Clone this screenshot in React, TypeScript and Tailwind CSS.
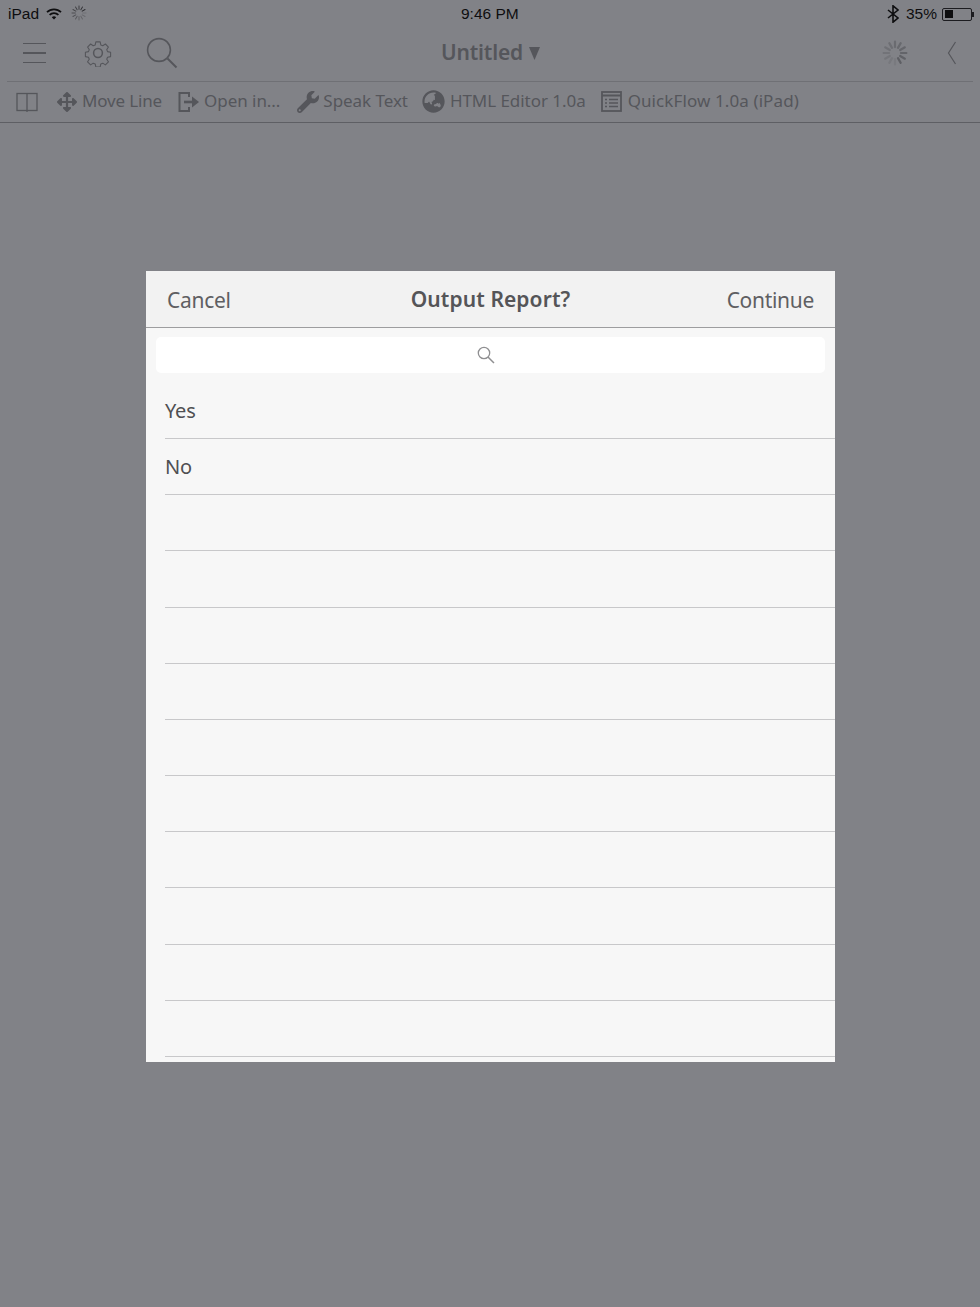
import React from "react";
import { FaWrench, FaGlobeAsia, FaArrowsAlt } from "react-icons/fa";

const sans = "font-['Noto_Sans',sans-serif]";

function Spinner({ size, color, width, dark, className = "" }: { size: number; color: string; width: number; dark: number; className?: string }) {
  const spokes = Array.from({ length: 12 }, (_, i) => i);
  return (
    <svg width={size} height={size} viewBox="0 0 24 24" className={className}>
      {spokes.map((i) => (
        <line
          key={i}
          x1="12"
          y1="1.500"
          x2="12"
          y2="6.500"
          stroke={color}
          strokeWidth={width}
          strokeLinecap="round"
          opacity={0.2 + (((i - dark + 12 + 11) % 12) / 11) * 0.8}
          transform={`rotate(${i * 30} 12 12)`}
        />
      ))}
    </svg>
  );
}

function Gear() {
  return (
    <svg width="28" height="28" viewBox="0 0 28 28" fill="none" stroke="#55565b" strokeWidth="1.200">
      <circle cx="14" cy="14" r="4.400" strokeWidth="1.500" />
      <path d="M11.600 1.600h4.800l.7 3.400 2.200.9 2.900-1.900 3.400 3.400-1.900 2.900.9 2.200 3.400.7v4.800l-3.400.7-.9 2.200 1.900 2.900-3.400 3.400-2.900-1.900-2.200.9-.7 3.400h-4.800l-.7-3.400-2.200-.9-2.900 1.900-3.400-3.400 1.900-2.900-.9-2.200-3.400-.7v-4.800l3.400-.7.9-2.200-1.900-2.900 3.400-3.400 2.900 1.900 2.200-.9z" transform="translate(1.400 1.400) scale(.9)" strokeLinejoin="round" />
    </svg>
  );
}

function ToolItem({ icon, label, gap, track = "tracking-[-0.05px]" }: { icon: React.ReactNode; label: string; gap: string; track?: string }) {
  return (
    <div className={`flex items-center ${gap}`}>
      {icon}
      <span className={`text-[17px] leading-none text-[#55565b] whitespace-nowrap -mt-[2px] ${track}`}>{label}</span>
    </div>
  );
}

function Row({ label }: { label?: string }) {
  return (
    <div className="ml-[19px] h-[56.16px] shrink-0 border-b border-[#c8c8ca] flex items-center">
      {label && <span className="text-[20px] leading-none text-[#4f4f52] mt-[1px] tracking-[-0.2px]">{label}</span>}
    </div>
  );
}

export default function App() {
  const rows = ["Yes", "No", "", "", "", "", "", "", "", "", "", ""];
  return (
    <div className={`${sans} w-[980px] h-[1307px] bg-[#818287] flex flex-col overflow-hidden`}>
      {/* Status bar */}
      <div className="relative h-[28px] shrink-0 flex items-center justify-between pl-2 pr-[6px] font-['Liberation_Sans',sans-serif] text-[15.500px] text-[#0e0e10]">
        <div className="flex items-center gap-[7px]">
          <span className="font-medium">iPad</span>
          <svg width="16" height="12" viewBox="0 0 16 12" fill="none" stroke="#0e0e10" strokeWidth="1.800" strokeLinecap="butt">
            <path d="M1 4.200a10 10 0 0 1 14 0" />
            <path d="M3.600 6.800a6.400 6.400 0 0 1 8.800 0" />
            <path d="M8 11.400 5.800 9.200a3.200 3.200 0 0 1 4.400 0z" fill="#0e0e10" stroke="none" />
          </svg>
          <Spinner size={16} color="#2c2c30" width={1.400} dark={2} className="-mt-[3px] ml-[2px]" />
        </div>
        <span className="absolute left-[461px] top-[5px] leading-[18px] font-medium">9:46 PM</span>
        <div className="flex items-center gap-[5px]">
          <svg width="12" height="18" viewBox="0 0 12 18" fill="none" stroke="#0e0e10" strokeWidth="1.600" className="mr-[2px]">
            <path d="M1 5l10 8-5 4.200V.8l5 4.200-10 8" />
          </svg>
          <span className="font-medium">35%</span>
          <div className="flex items-center">
            <div className="w-[30px] h-[13px] border border-[#1c1c20] rounded-[2px] p-[1.500px]">
              <div className="w-[8px] h-full bg-[#0e0e10]" />
            </div>
            <div className="w-[2px] h-[5px] bg-[#1c1c20]" />
          </div>
        </div>
      </div>

      {/* Main toolbar */}
      <div className="mx-[7px] h-[54px] shrink-0 border-b border-[#6f7075] flex items-center pl-[16px] pr-[16px] pb-[3px]">
        <div className="flex-1 flex items-center gap-[38px]">
          <div className="flex flex-col gap-[8px] w-[23px]">
            <div className="h-[1.500px] bg-[#55565b]" />
            <div className="h-[1.500px] bg-[#55565b]" />
            <div className="h-[1.500px] bg-[#55565b]" />
          </div>
          <Gear />
          <svg width="32" height="32" viewBox="0 0 32 32" fill="none" stroke="#55565b" strokeWidth="1.600" className="-ml-[4px] -mt-[1px]">
            <circle cx="13" cy="13" r="11.400" />
            <path d="M21.500 21.500 30.500 30.500" strokeWidth="2" />
          </svg>
        </div>
        <div className="flex items-center gap-[6px] ml-[1px]">
          <span className="text-[21px] leading-none font-semibold text-[#55565b] tracking-[-0.2px] -mt-[2px]">Untitled</span>
          <svg width="11" height="13" viewBox="0 0 11 13" fill="#55565b"><path d="M0 0h11L5.500 13z" /></svg>
        </div>
        <div className="flex-1 flex items-center justify-end gap-[39px]">
          <Spinner size={26} color="#5e5f64" width={2} dark={5} />
          <svg width="10" height="24" viewBox="0 0 10 24" fill="none" stroke="#55565b" strokeWidth="1.200"><path d="M8.500 1 1.500 12l7 11" /></svg>
        </div>
      </div>

      {/* Secondary toolbar */}
      <div className="h-[41px] shrink-0 border-b border-[#5e5f64] flex items-center pl-[16px] pb-[1px]">
        <svg width="22" height="20" viewBox="0 0 22 20" fill="none" stroke="#55565b" strokeWidth="1.300" className="mr-[19px]">
          <rect x="1" y="1.500" width="20" height="17" />
          <path d="M11 1.500V20" />
        </svg>
        <ToolItem icon={<FaArrowsAlt size={20} color="#55565b" />} label="Move Line" gap="gap-[5px] mr-[16px]" track="tracking-[-0.15px]" />
        <ToolItem
          icon={
            <svg width="21" height="22" viewBox="0 0 21 22" fill="none" stroke="#55565b" strokeWidth="2">
              <path d="M11 6V2H1.500v18H11v-4" />
              <path d="M6 11h9" strokeWidth="2.600" />
              <path d="M14 5.500l7 5.500-7 5.500z" fill="#55565b" stroke="none" />
            </svg>
          }
          label="Open in..."
          gap="gap-[5px] mr-[17px]"
        />
        <ToolItem icon={<FaWrench size={22} color="#55565b" />} label="Speak Text" gap="gap-[4px] mr-[14px]" />
        <ToolItem icon={<FaGlobeAsia size={23} color="#55565b" />} label="HTML Editor 1.0a" gap="gap-[5px] mr-[15px]" />
        <ToolItem
          icon={
            <svg width="21" height="21" viewBox="0 0 21 21" fill="none" stroke="#55565b">
              <rect x="1" y="1" width="19" height="19" strokeWidth="1.800" />
              <path d="M1 4.500h19" strokeWidth="2" />
              <path d="M4 8.500h2M8 8.500h9M4 12h2M8 12h9M4 15.500h2M8 15.500h9" strokeWidth="1.500" />
            </svg>
          }
          label="QuickFlow 1.0a (iPad)"
          gap="gap-[6px]"
          track="tracking-[0.1px]"
        />
      </div>

      {/* Dialog */}
      <div className="flex-1 pt-[148px] pl-[146px]">
        <div className="w-[689px] h-[791px] bg-[#f7f7f7] overflow-hidden flex flex-col">
          <div className="relative h-[57px] shrink-0 bg-[#f2f2f2] border-b border-[#9d9d9f] flex items-center justify-between pl-[21px] pr-[21px] pt-[2px]">
            <span className="text-[21px] leading-none text-[#5f5f62] tracking-[-0.3px]">Cancel</span>
            <span className="text-[21px] leading-none text-[#5f5f62] tracking-[-0.3px]">Continue</span>
            <span className="absolute left-0 right-0 top-[18px] text-center text-[21px] leading-none font-semibold text-[#555558] tracking-[0.1px]">Output Report?</span>
          </div>
          <div className="px-[10px] pt-[9px] pb-[10px] shrink-0">
            <div className="h-[36px] bg-white rounded-[5px] flex items-center justify-center">
              <svg width="18" height="18" viewBox="0 0 18 18" fill="none" stroke="#8f8f91" strokeWidth="1.300" className="-ml-[9px]">
                <circle cx="7" cy="7" r="5.700" />
                <path d="M11 11l6 6" strokeWidth="1.500" />
              </svg>
            </div>
          </div>
          {rows.map((label, i) => (
            <Row key={i} label={label} />
          ))}
        </div>
      </div>
    </div>
  );
}
